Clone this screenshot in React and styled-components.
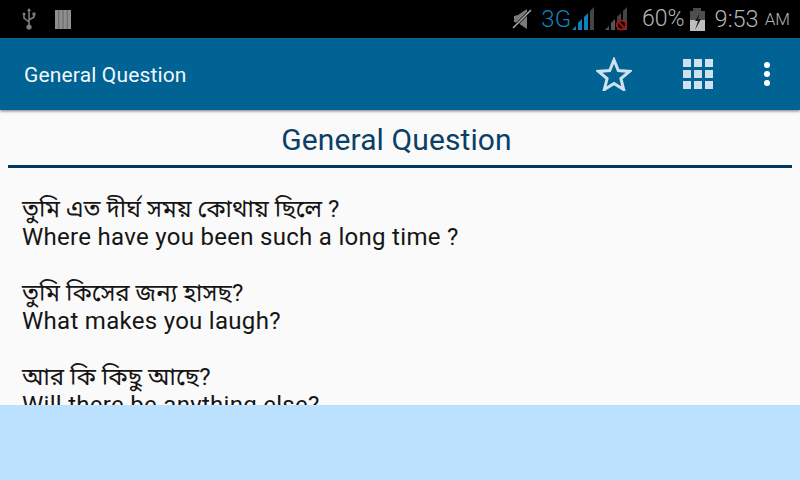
import React from "react";
import styled, { createGlobalStyle } from "styled-components";

const GlobalStyle = createGlobalStyle`
  html, body {
    margin: 0;
    padding: 0;
    background: #000;
  }
`;

const Page = styled.div`
  width: 800px;
  height: 480px;
  display: flex;
  flex-direction: column;
  overflow: hidden;
  font-family: Roboto, "Noto Sans", "Noto Sans Bengali", sans-serif;
`;

const StatusBar = styled.div`
  height: 38px;
  flex: none;
  background: #000;
  display: flex;
  align-items: center;
  justify-content: space-between;
  padding: 0 10px 0 20px;
`;

const StatusGroup = styled.div`
  display: flex;
  align-items: center;
`;

const StatusSlot = styled.div`
  display: flex;
  align-items: center;
  margin-left: ${(p) => p.$left || 0}px;
`;

const StatusText = styled.span`
  color: ${(p) => p.$color || "#b5b5b5"};
  font-size: ${(p) => p.$size || 24}px;
  font-weight: 300;
  line-height: 38px;
  margin-left: ${(p) => p.$left || 0}px;
`;

const AppBar = styled.header`
  height: 72px;
  flex: none;
  background: #006394;
  display: flex;
  align-items: center;
  padding: 0 30px 0 24px;
  box-shadow: 0 1px 3px rgba(0, 0, 0, 0.55);
  position: relative;
  z-index: 1;
`;

const AppTitle = styled.div`
  flex: 1;
  color: #f2f7fa;
  font-size: 21px;
  letter-spacing: 0.15px;
  padding-top: 2px;
`;

const Actions = styled.div`
  display: flex;
  align-items: center;
  gap: 51px;
`;

const Content = styled.main`
  flex: 1;
  min-height: 0;
  overflow: hidden;
  background: #fafafa;
  padding: 12px 8px 0;
`;

const Heading = styled.h1`
  margin: 0;
  height: 43px;
  padding-right: 7px;
  border-bottom: 3px solid #023a5f;
  color: #0b3f66;
  font-size: 30px;
  font-weight: 400;
  line-height: 36px;
  letter-spacing: 0.1px;
  text-align: center;
`;

const Phrases = styled.div`
  padding: 27px 14px 0;
  display: flex;
  flex-direction: column;
  gap: 28px;
`;

const Phrase = styled.div`
  color: #151515;
  font-size: 24px;
  line-height: 28px;
`;

const PhraseLine = styled.div`
  letter-spacing: ${(p) => p.$spacing || 0}px;
  white-space: nowrap;
`;

const AdBanner = styled.div`
  height: 75px;
  flex: none;
  background: #bbe1ff;
`;

const UsbIcon = () => (
  <svg width="16" height="24" viewBox="0 0 16 24" fill="none" stroke="#7d7d7d" strokeWidth="1.6">
    <path d="M8 2v17M8 15L3 11V8M8 13l5-3V7" />
    <path d="M8 1l2 3H6z" fill="#7d7d7d" stroke="none" />
    <circle cx="3" cy="7" r="1.5" fill="#7d7d7d" stroke="none" />
    <rect x="11.5" y="5.5" width="3" height="3" fill="#7d7d7d" stroke="none" />
    <circle cx="8" cy="20" r="2.6" fill="#7d7d7d" stroke="none" />
  </svg>
);

const BarcodeIcon = () => (
  <svg width="16" height="19" viewBox="0 0 16 19">
    <rect width="16" height="19" fill="#5a5a5a" />
    <g fill="#8f8f8f">
      <rect x="0" y="0" width="3.4" height="19" />
      <rect x="4.2" y="0" width="3.4" height="19" />
      <rect x="8.4" y="0" width="3.4" height="19" />
      <rect x="12.6" y="0" width="3.4" height="19" />
    </g>
  </svg>
);

const MuteIcon = () => (
  <svg width="20" height="22" viewBox="0 0 20 22">
    <path d="M2 8l4-1 9-6v20l-9-6-4-1z" fill="#7a7a7a" />
    <path d="M1 20L19 2" stroke="#000" strokeWidth="3" />
    <path d="M1 20L19 2" stroke="#b0b0b0" strokeWidth="1.4" />
  </svg>
);

const SignalIcon = () => (
  <svg width="24" height="24" viewBox="0 0 24 24">
    <path d="M0 23h4v-4z" fill="#0f82bd" />
    <path d="M6 23h4V12l-4 4z" fill="#0f82bd" />
    <path d="M12 23h4V6l-4 4z" fill="#0f82bd" />
    <path d="M18 23h4V0l-4 4z" fill="#444" />
  </svg>
);

const BlockedSignalIcon = () => (
  <svg width="24" height="24" viewBox="0 0 24 24">
    <path d="M0 23h4v-4zM6 23h4V12l-4 4z" fill="#555" />
    <path d="M12 23h4V6l-4 4zM18 23h4V0l-4 4z" fill="#444" />
    <circle cx="16.5" cy="18" r="4.6" fill="#000" stroke="#a01818" strokeWidth="2" />
    <path d="M13.5 15l6 6" stroke="#a01818" strokeWidth="2" />
  </svg>
);

const BatteryIcon = () => (
  <svg width="15" height="23" viewBox="0 0 15 23">
    <path d="M3 0h8v3H3z" fill="#4a4a4a" />
    <path d="M0 3h15v9H0z" fill="#4f4f4f" />
    <path d="M0 12h15v11H0z" fill="#bdbdbd" />
    <path d="M10 5L5 13h3l-3 9 6-11H8z" fill="#151515" />
  </svg>
);

const StarIcon = () => (
  <svg width="36" height="34" viewBox="0 0 36 34" fill="none" stroke="#cfe1ec" strokeWidth="3">
    <path d="M18 3l4.3 10.6 11.2.8-8.6 7.2 2.8 11L18 26.5 8.3 32.6l2.8-11-8.6-7.2 11.2-.8z" />
  </svg>
);

const GridIcon = () => (
  <svg width="30" height="30" viewBox="0 0 30 30" fill="#cfe1ec">
    {[0, 11, 22].map((y) =>
      [0, 11, 22].map((x) => <rect key={`${x}-${y}`} x={x} y={y} width="8" height="8" />)
    )}
  </svg>
);

const MoreIcon = () => (
  <svg width="6" height="26" viewBox="0 0 6 26" fill="#fff">
    <circle cx="3" cy="4" r="3" />
    <circle cx="3" cy="13" r="3" />
    <circle cx="3" cy="22" r="3" />
  </svg>
);

const phrases = [
  ["তুমি এত দীর্ঘ সময় কোথায় ছিলে ?", "Where have you been such a long time ?"],
  ["তুমি কিসের জন্য হাসছ?", "What makes you laugh?"],
  ["আর কি কিছু আছে?", "Will there be anything else?"],
];

const App = () => {
  return (
    <Page>
      <GlobalStyle />
      <StatusBar>
        <StatusGroup>
          <StatusSlot $left={1}>
            <UsbIcon />
          </StatusSlot>
          <StatusSlot $left={18}>
            <BarcodeIcon />
          </StatusSlot>
        </StatusGroup>
        <StatusGroup>
          <MuteIcon />
          <StatusText $color="#0f82bd" $left={9}>
            3G
          </StatusText>
          <StatusSlot $left={1}>
            <SignalIcon />
          </StatusSlot>
          <StatusSlot $left={9}>
            <BlockedSignalIcon />
          </StatusSlot>
          <StatusText $size={23} $left={13}>
            60%
          </StatusText>
          <StatusSlot $left={5}>
            <BatteryIcon />
          </StatusSlot>
          <StatusText $size={23.5} $left={10}>
            9:53
          </StatusText>
          <StatusText $size={17} $left={6}>
            AM
          </StatusText>
        </StatusGroup>
      </StatusBar>
      <AppBar>
        <AppTitle>General Question</AppTitle>
        <Actions>
          <StarIcon />
          <GridIcon />
          <MoreIcon />
        </Actions>
      </AppBar>
      <Content>
        <Heading>General Question</Heading>
        <Phrases>
          {phrases.map(([bn, en]) => (
            <Phrase key={en}>
              <PhraseLine>{bn}</PhraseLine>
              <PhraseLine $spacing={0.29}>{en}</PhraseLine>
            </Phrase>
          ))}
        </Phrases>
      </Content>
      <AdBanner />
    </Page>
  );
};

export default App;
